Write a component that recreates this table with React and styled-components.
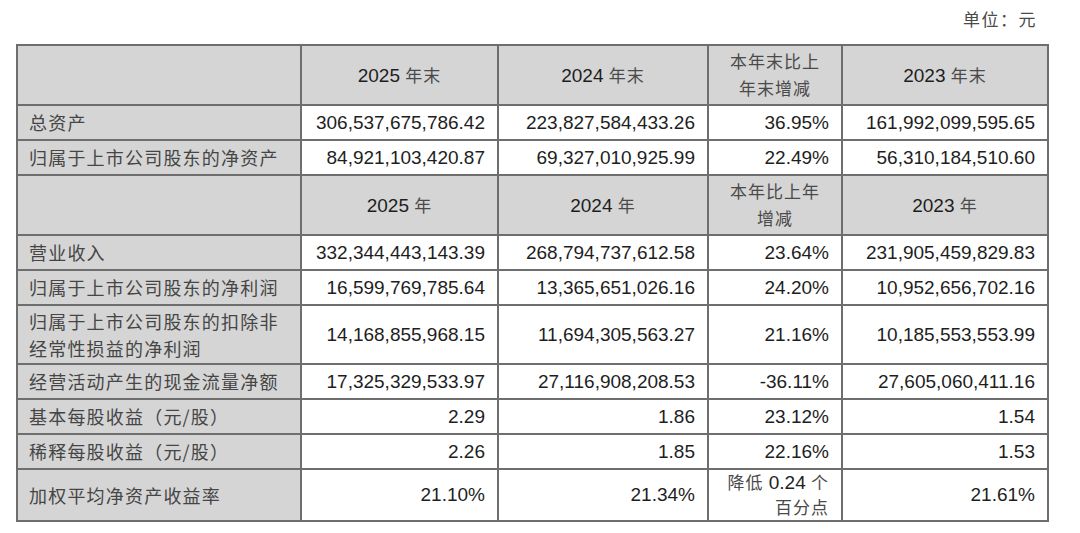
import React from 'react'
import styled, { createGlobalStyle } from 'styled-components'

const GlobalStyle = createGlobalStyle`
  html, body {
    margin: 0;
    padding: 0;
    background: #ffffff;
  }
  body {
    font-family: 'Liberation Sans', 'Noto Sans CJK SC', sans-serif;
  }
`

const Page = styled.div`
  width: 1031px;
  margin-left: 16px;
`

const UnitLine = styled.div`
  display: flex;
  justify-content: flex-end;
  align-items: center;
  height: 36px;
  padding-right: 10px;
  margin-bottom: 8px;
  font-family: 'Noto Sans CJK SC', sans-serif;
  font-size: 17px;
  letter-spacing: 1.5px;
  color: #4a4a4a;
`

const Table = styled.table`
  width: 1031px;
  table-layout: fixed;
  border-collapse: collapse;
  border: 2px solid #6a6a6a;
  font-family: 'Liberation Sans', 'Noto Sans CJK SC', sans-serif;
  font-size: 19px;
  color: #1e1e1e;
`

const Row = styled.tr`
  height: ${(p) => p.$h}px;
`

const Cell = styled.td`
  border: 2px solid #6e6e6e;
  padding: 0;
  vertical-align: middle;
`

const HeadCell = styled(Cell)`
  background: #d5d5d5;
  text-align: center;
  line-height: 26px;
`

const SubHead = styled.span`
  font-family: 'Noto Sans CJK SC', sans-serif;
  font-size: 17px;
  letter-spacing: 1px;
  color: #4a4a4a;
`

const LabelCell = styled(Cell)`
  background: #d5d5d5;
  padding-left: 11px;
  font-family: 'Noto Sans CJK SC', sans-serif;
  font-size: 18px;
  letter-spacing: 1.2px;
  line-height: 27px;
  color: #454545;
`

const NumCell = styled(Cell)`
  background: #ffffff;
  text-align: right;
  padding-right: 12px;
  line-height: ${(p) => (p.$tight ? 24 : 26)}px;
`

const NoteText = styled.span`
  font-family: 'Noto Sans CJK SC', sans-serif;
  font-size: 17px;
  letter-spacing: 1px;
  color: #4a4a4a;
`

const NoteNum = styled.span`
  font-family: 'Liberation Sans', sans-serif;
  font-size: 19px;
  color: #1e1e1e;
`

const balanceRows = [
  ['总资产', '306,537,675,786.42', '223,827,584,433.26', '36.95%', '161,992,099,595.65'],
  ['归属于上市公司股东的净资产', '84,921,103,420.87', '69,327,010,925.99', '22.49%', '56,310,184,510.60'],
]

const incomeRows = [
  { h: 35, cells: ['营业收入', '332,344,443,143.39', '268,794,737,612.58', '23.64%', '231,905,459,829.83'] },
  { h: 35, cells: ['归属于上市公司股东的净利润', '16,599,769,785.64', '13,365,651,026.16', '24.20%', '10,952,656,702.16'] },
  {
    h: 59,
    cells: [
      <>
        归属于上市公司股东的扣除非
        <br />
        经常性损益的净利润
      </>,
      '14,168,855,968.15',
      '11,694,305,563.27',
      '21.16%',
      '10,185,553,553.99',
    ],
  },
  { h: 35, cells: ['经营活动产生的现金流量净额', '17,325,329,533.97', '27,116,908,208.53', '-36.11%', '27,605,060,411.16'] },
  { h: 35, cells: ['基本每股收益（元/股）', '2.29', '1.86', '23.12%', '1.54'] },
  { h: 35, cells: ['稀释每股收益（元/股）', '2.26', '1.85', '22.16%', '1.53'] },
  {
    h: 52,
    tight: true,
    cells: [
      '加权平均净资产收益率',
      '21.10%',
      '21.34%',
      <>
        <NoteText>降低</NoteText> <NoteNum>0.24</NoteNum> <NoteText>个</NoteText>
        <br />
        <NoteText>百分点</NoteText>
      </>,
      '21.61%',
    ],
  },
]

const Year = ({ year, suffix }) => (
  <>
    {year} <SubHead>{suffix}</SubHead>
  </>
)

const DataRow = ({ h, tight, cells }) => (
  <Row $h={h}>
    <LabelCell>{cells[0]}</LabelCell>
    {cells.slice(1).map((c, i) => (
      <NumCell key={i} $tight={tight}>
        {c}
      </NumCell>
    ))}
  </Row>
)

export default function App() {
  return (
    <>
      <GlobalStyle />
      <Page>
        <UnitLine>单位：元</UnitLine>
        <Table>
          <colgroup>
            <col style={{ width: 284 }} />
            <col style={{ width: 197 }} />
            <col style={{ width: 210 }} />
            <col style={{ width: 134 }} />
            <col style={{ width: 206 }} />
          </colgroup>
          <tbody>
            <Row $h={60}>
              <HeadCell />
              <HeadCell>
                <Year year='2025' suffix='年末' />
              </HeadCell>
              <HeadCell>
                <Year year='2024' suffix='年末' />
              </HeadCell>
              <HeadCell>
                <SubHead>
                  本年末比上
                  <br />
                  年末增减
                </SubHead>
              </HeadCell>
              <HeadCell>
                <Year year='2023' suffix='年末' />
              </HeadCell>
            </Row>
            {balanceRows.map((cells, i) => (
              <DataRow key={i} h={35} cells={cells} />
            ))}
            <Row $h={60}>
              <HeadCell />
              <HeadCell>
                <Year year='2025' suffix='年' />
              </HeadCell>
              <HeadCell>
                <Year year='2024' suffix='年' />
              </HeadCell>
              <HeadCell>
                <SubHead>
                  本年比上年
                  <br />
                  增减
                </SubHead>
              </HeadCell>
              <HeadCell>
                <Year year='2023' suffix='年' />
              </HeadCell>
            </Row>
            {incomeRows.map((r, i) => (
              <DataRow key={i} h={r.h} tight={r.tight} cells={r.cells} />
            ))}
          </tbody>
        </Table>
      </Page>
    </>
  )
}
